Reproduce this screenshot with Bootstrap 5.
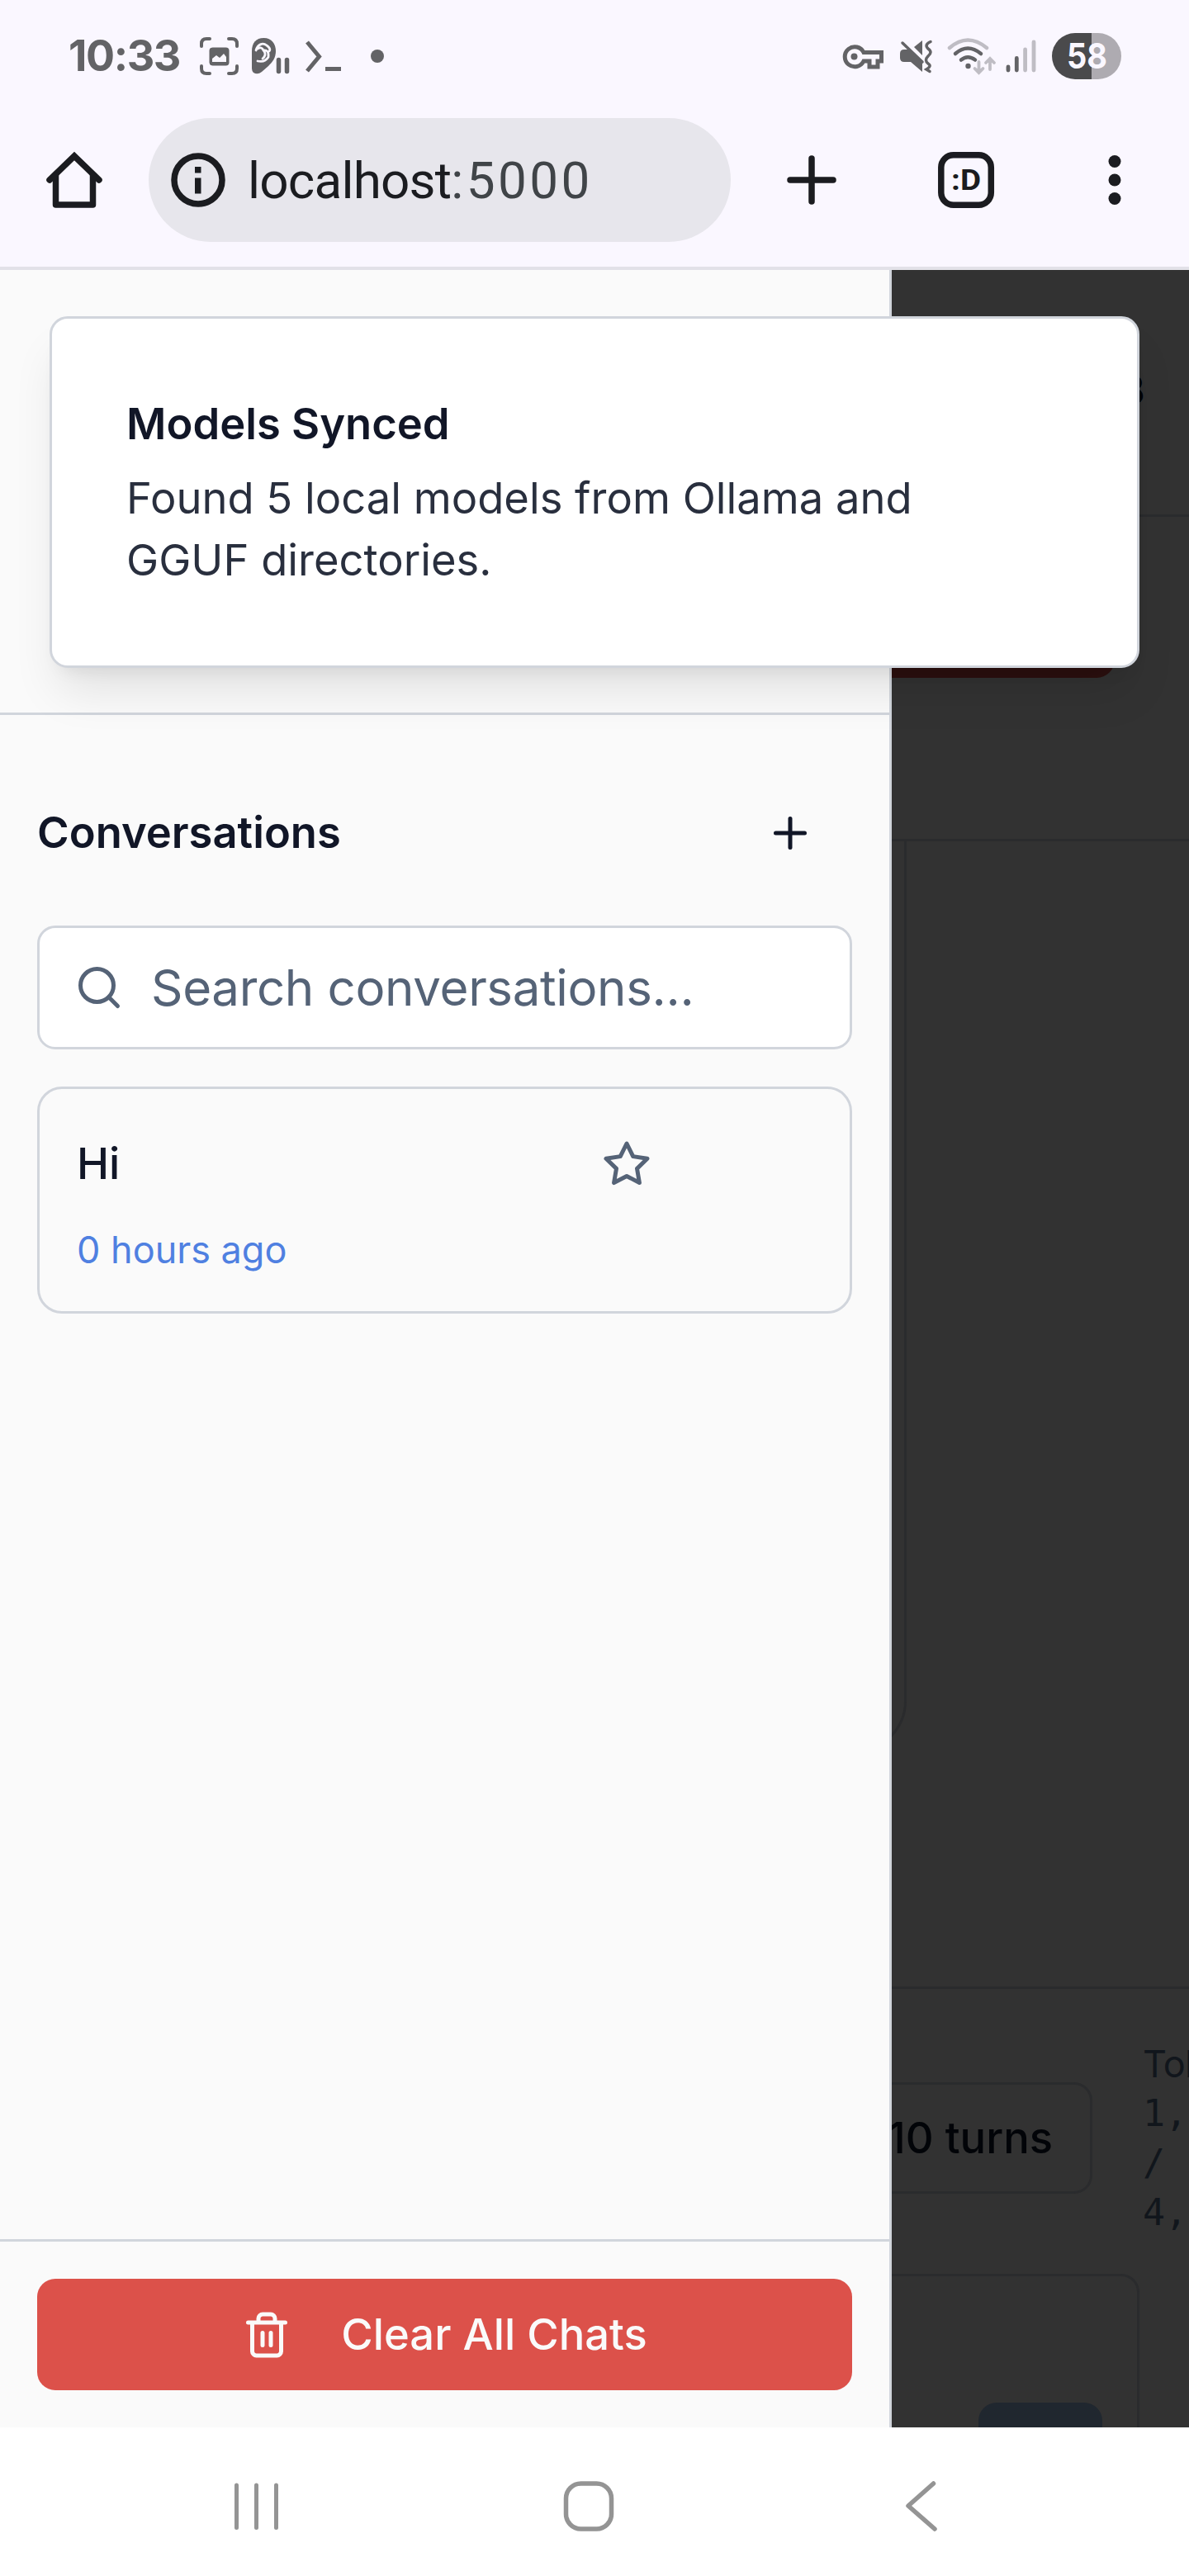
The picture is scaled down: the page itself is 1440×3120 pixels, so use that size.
<!DOCTYPE html>
<html lang="en">
<head>
<meta charset="utf-8">
<title>localhost:5000</title>
<meta name="viewport" content="width=device-width, initial-scale=1">
<link href="https://cdn.jsdelivr.net/npm/bootstrap@5.3.0/dist/css/bootstrap.min.css" rel="stylesheet">
<style>
html, body { margin: 0; }
body { width: 1440px; height: 3120px; font-family: Inter, "Liberation Sans", sans-serif; font-size: 52.5px; line-height: 75px; color: #111627; background: #fff; overflow: hidden; }
svg { display: block; flex: none; }
.chrome-top { background: #faf7ff; height: 327px; border-bottom: 4px solid #e2e1e8; }
.status-bar { padding: 40px 82px 0 83px; height: 96px; color: #636366; }
.clock { width: 157px; font-size: 52px; font-weight: 700; line-height: 56px; letter-spacing: -1.4px; white-space: nowrap; }
.url-row { height: 150px; margin-top: 47px; padding-left: 50px; color: #1b1c20; }
.url-pill { width: 705px; height: 150px; margin-left: 50px; padding-left: 20px; background: #e7e6ec; border-radius: 75px; font-family: Roboto, sans-serif; font-size: 62px; white-space: nowrap; }
.url-host { margin-left: 20px; letter-spacing: -.8px; }
.url-port { color: #404448; letter-spacing: 3.4px; }
.viewport { height: 2613px; background: #323232; }
.side-panel { width: 1080px; background: #fafafa; border-right: 3px solid #d1d5dc; }
.side-head { height: 539px; border-bottom: 3px solid #d1d5dc; }
.side-body { padding: 75px 45px 45px; }
.side-title { font-size: 52.5px; font-weight: 600; line-height: 75px; margin: 0; }
.new-chat { width: 150px; height: 135px; padding: 0; }
.search-box { height: 150px; margin-top: 45px; padding-left: 42px; gap: 33px; background: #fff; border: 3px solid #d1d5dc; border-radius: 22px; font-size: 60px; color: #556377; letter-spacing: -.35px; }
.chat-item { height: 275px; margin-top: 45px; padding: 53px 45px 0; background: transparent; border: 3px solid #d1d5dc; border-radius: 30px; }
.chat-name { font-weight: 500; width: 636px; }
.chat-time { font-size: 45px; line-height: 60px; color: #4f80e1; margin-top: 37px; }
.side-foot { height: 228px; padding: 45px; border-top: 3px solid #d1d5dc; }
.clear-btn, .clear-btn:hover { height: 135px; border: 0; border-radius: 22px; background: #dc514a; color: #fafafa; gap: 60px; font-size: 52.5px; line-height: 75px; font-weight: 500; }
.dim-pane { width: 360px; }
.line { border: 0 solid #2a2b2d; }
.app-head { height: 299px; border-bottom-width: 3px; padding: 115px 54px 0 0; font-size: 46px; font-weight: 700; line-height: 60px; color: #020408; }
.app-bar { height: 393px; border-bottom-width: 3px; }
.stop-btn { width: 270px; height: 135px; margin-top: 60px; background: #2c100f; border-radius: 0 22px 22px 0; }
.app-main { height: 1387px; }
.msg-panel { width: 18px; height: 1102px; overflow: hidden; }
.msg-shape { width: 180px; height: 1102px; border-width: 0 3px 3px 0; border-radius: 0 0 60px 0; flex: none; }
.app-foot { border-top-width: 3px; height: 534px; }
.foot-row { padding-top: 58px; height: 345px; }
.turns { width: 243px; height: 135px; margin-top: 55px; padding-right: 45px; border-width: 3px 3px 3px 0; border-radius: 0 22px 22px 0; color: #020408; font-weight: 500; white-space: nowrap; }
.tokens { margin-left: 61px; padding-top: 3px; font-size: 45px; line-height: 60px; color: #11161c; white-space: nowrap; letter-spacing: -.8px; }
.tokens .mono { font-family: "DejaVu Sans Mono", monospace; letter-spacing: 0; }
.composer { width: 300px; height: 186px; border-width: 3px 3px 0 0; border-radius: 0 22px 0 0; padding: 153px 42px 0 0; }
.send { width: 150px; height: 33px; background: #20272f; border-radius: 22px 22px 0 0; }
.sync-toast { position: absolute; z-index: 5; left: 60px; top: 56px; width: 1320px; height: 426px; padding: 90px; background: #fff; border: 3px solid #d1d5dc; border-radius: 22px; box-shadow: 0 37px 56px -11px rgba(0,0,0,.1), 0 15px 22px -15px rgba(0,0,0,.1); }
.toast-title { font-weight: 600; margin-bottom: 15px; }
.toast-text { color: #292f3e; width: 1000px; }
.nav-keys { height: 180px; padding: 10px 0 0 270px; color: #949494; }
</style>
</head>
<body class="d-flex flex-column">
<header class="chrome-top flex-shrink-0">
  <div class="status-bar d-flex">
    <div class="clock">10:33</div>
    <svg width="60" height="56" viewBox="240 40 60 56" fill="none" stroke="#636366" stroke-width="4" stroke-linecap="round">
      <path d="M244 56v-3q0-6 6-6h4M277 47h4q6 0 6 6v3M287 80v3q0 6-6 6h-4M254 89h-4q-6 0-6-6v-3"/>
      <rect x="253.500" y="57.500" width="24" height="22" rx="4" fill="#636366" stroke="none"/>
      <path d="M257 75v-4l5-4 4 3 5-5 3 4v6z" fill="#faf7ff" stroke="none"/>
    </svg>
    <svg width="60" height="56" viewBox="300 40 60 56">
      <path d="M319.500 46C329 46 334 53 334 62C334 70 330 75 325 80L317 87Q312 91 307 88Q305 86 305 83V62C305 52 310 46 319.500 46Z" fill="#636366"/>
      <path d="M310 61C312 54 318 51 323 55C326 57 328 60 326 62M312 59Q317 56 319 61Q326 60 325 69Q321 76 312 74M320 62Q323 67 318 71" fill="none" stroke="#faf7ff" stroke-width="2.800" stroke-linecap="round"/>
      <path d="M337.500 72.500V86.500M347.500 72.500V86.500" stroke="#636366" stroke-width="5.500" stroke-linecap="round"/>
    </svg>
    <svg width="70" height="56" viewBox="360 40 70 56" fill="none" stroke="#636366" stroke-width="5">
      <path d="M372 51L386.500 68.500L372 86M394 83.500H413"/>
    </svg>
    <svg width="50" height="56" viewBox="430 40 50 56"><circle cx="457" cy="68" r="8" fill="#636366"/></svg>
    <svg class="ms-auto" width="62" height="56" viewBox="1018 40 62 56">
      <path d="M1046 63.500A12 12 0 1 0 1046 74H1053V81H1063V74H1067.500V63.500Z" fill="none" stroke="#636366" stroke-width="5"/>
      <circle cx="1034.500" cy="68.500" r="4" fill="#636366"/>
    </svg>
    <svg width="60" height="56" viewBox="1080 40 60 56">
      <path d="M1095 60H1100L1117 76V87L1103 75H1095Q1090 75 1090 70V65Q1090 60 1095 60ZM1117 49V67L1107 57Z" fill="#636366"/>
      <path d="M1093 52L1117 75" stroke="#636366" stroke-width="3.500" stroke-linecap="round"/>
      <path d="M1127 50.500Q1119 54 1124 59Q1130 63 1124 68Q1119 73 1124 77Q1129 80 1122 84L1126 86.500" fill="none" stroke="#636366" stroke-width="3.500" stroke-linecap="round"/>
    </svg>
    <svg width="72" height="56" viewBox="1140 40 72 56" fill="none" stroke-width="4.500" stroke-linecap="round">
      <path d="M1150 58Q1172 39 1195 58" stroke="#bfbdc4"/>
      <path d="M1157 65Q1172 52 1188 65M1164 72.500Q1172 66 1181 72.500" stroke="#636366"/>
      <circle cx="1172.500" cy="80" r="3.200" fill="#636366"/>
      <path d="M1185.500 75V87M1180.500 83L1185.500 88L1190.500 83M1199 84V72M1194 76L1199 71L1204 76" stroke="#bfbdc4" stroke-width="3.800"/>
    </svg>
    <svg width="62" height="56" viewBox="1212 40 62 56" stroke-width="4.800" stroke-linecap="round">
      <path d="M1221 81V85M1231.300 70.500V85" stroke="#636366"/>
      <path d="M1241.600 60V85M1252 51V85" stroke="#bfbdc4"/>
    </svg>
    <svg width="84" height="56" viewBox="1274 40 84 56">
      <path d="M1322 40H1302A28 28 0 0 0 1302 96H1322Z" fill="#4a4a4c"/>
      <path d="M1322 40H1330A28 28 0 0 1 1330 96H1322Z" fill="#aeabb1"/>
      <text x="1316.500" y="83" text-anchor="middle" font-family="Inter, sans-serif" font-weight="700" font-size="43" textLength="49" lengthAdjust="spacingAndGlyphs" fill="#faf7ff">58</text>
    </svg>
  </div>
  <div class="url-row d-flex align-items-center">
    <svg width="80" height="80" viewBox="50 178 80 80" fill="none" stroke="#1b1c20" stroke-width="7.500" stroke-linecap="round" stroke-linejoin="round">
      <path d="M60 218L90 189L120 218" stroke-linejoin="miter"/><path d="M67.500 212V248H112.500V212"/>
    </svg>
    <div class="url-pill d-flex align-items-center">
      <svg width="80" height="80" viewBox="200 178 80 80" fill="#1b1c20">
        <circle cx="240" cy="218" r="29" fill="none" stroke="#1b1c20" stroke-width="7.500"/>
        <path d="M236 202h7.500v7.500h-7.500zM236 215.500h7.500v19h-7.500z"/>
      </svg>
      <span class="url-host">localhost</span><span class="url-port">:5000</span>
    </div>
    <svg width="80" height="80" viewBox="943 178 80 80" style="margin-left:58px" stroke="#1b1c20" stroke-width="7.500" stroke-linecap="round"><path d="M957 218H1009M983 192V244"/></svg>
    <svg width="80" height="80" viewBox="1130 178 80 80" style="margin-left:107px">
      <rect x="1139.800" y="187.800" width="60.500" height="60.500" rx="15" fill="none" stroke="#1b1c20" stroke-width="7.500"/>
      <text x="1152" y="229.500" font-family="Roboto, sans-serif" font-weight="700" font-size="35" textLength="36" lengthAdjust="spacingAndGlyphs" fill="#1b1c20">:D</text>
    </svg>
    <svg width="40" height="80" viewBox="1330 178 40 80" style="margin-left:120px" fill="#1b1c20"><circle cx="1350" cy="195.500" r="7.500"/><circle cx="1350" cy="218" r="7.500"/><circle cx="1350" cy="240.500" r="7.500"/></svg>
  </div>
</header>

<main class="viewport position-relative d-flex flex-shrink-0 overflow-hidden">
  <aside class="side-panel d-flex flex-column flex-shrink-0">
    <div class="side-head flex-shrink-0"></div>
    <div class="side-body flex-grow-1">
      <div class="d-flex align-items-center justify-content-between">
        <h2 class="side-title">Conversations</h2>
        <button class="btn new-chat d-flex align-items-center justify-content-center" aria-label="New conversation">
          <svg width="60" height="60" viewBox="0 0 24 24" fill="none" stroke="#111627" stroke-width="2" stroke-linecap="round"><path d="M5 12h14M12 5v14"/></svg>
        </button>
      </div>
      <div class="search-box d-flex align-items-center">
        <svg width="60" height="60" viewBox="0 0 24 24" fill="none" stroke="#556377" stroke-width="2" stroke-linecap="round"><circle cx="11" cy="11" r="8"/><path d="m21 21-4.300-4.300"/></svg>
        <span>Search conversations...</span>
      </div>
      <div class="chat-item">
        <div class="d-flex align-items-center">
          <div class="chat-name">Hi</div>
          <svg width="60" height="60" viewBox="0 0 24 24" fill="none" stroke="#556377" stroke-width="2" stroke-linecap="round" stroke-linejoin="round"><polygon points="12 2 15.090 8.260 22 9.270 17 14.140 18.180 21.020 12 17.770 5.820 21.020 7 14.140 2 9.270 8.910 8.260 12 2"/></svg>
        </div>
        <div class="chat-time">0 hours ago</div>
      </div>
    </div>
    <div class="side-foot flex-shrink-0">
      <button class="clear-btn btn w-100 p-0 d-flex align-items-center justify-content-center">
        <svg width="60" height="60" viewBox="0 0 24 24" fill="none" stroke="#fafafa" stroke-width="2" stroke-linecap="round" stroke-linejoin="round"><path d="M3 6h18M19 6v14c0 1-1 2-2 2H7c-1 0-2-1-2-2V6M8 6V4c0-1 1-2 2-2h4c1 0 2 1 2 2v2M10 11v6M14 11v6"/></svg>
        <span>Clear All Chats</span>
      </button>
    </div>
  </aside>

  <section class="dim-pane d-flex flex-column flex-shrink-0">
    <div class="app-head line text-end flex-shrink-0">B</div>
    <div class="app-bar line d-flex align-items-start flex-shrink-0"><div class="stop-btn"></div></div>
    <div class="app-main flex-shrink-0"><div class="msg-panel d-flex justify-content-end"><div class="msg-shape line"></div></div></div>
    <div class="app-foot line flex-shrink-0">
      <div class="foot-row d-flex align-items-start">
        <div class="turns line d-flex align-items-center justify-content-end flex-shrink-0 overflow-hidden">10 turns</div>
        <div class="tokens">Tokens:<div class="mono">1,<br>/<br>4,</div></div>
      </div>
      <div class="composer line d-flex justify-content-end"><div class="send"></div></div>
    </div>
  </section>

  <div class="sync-toast" role="status">
    <div class="toast-title">Models Synced</div>
    <div class="toast-text">Found 5 local models from Ollama and GGUF directories.</div>
  </div>
</main>

<nav class="nav-keys d-flex align-items-center flex-shrink-0 bg-white">
  <svg width="80" height="80" viewBox="270 2995 80 80" stroke="#949494" stroke-width="5" stroke-linecap="round"><path d="M286.500 3010V3061.500M310.500 3010V3061.500M334.500 3010V3061.500"/></svg>
  <svg width="80" height="80" viewBox="673 2995 80 80" style="margin-left:323px" fill="none" stroke="#949494" stroke-width="5.500"><rect x="685.500" y="3008" width="55" height="55" rx="18"/></svg>
  <svg width="80" height="80" viewBox="1076 2995 80 80" style="margin-left:323px" fill="none" stroke="#949494" stroke-width="5.500" stroke-linecap="round" stroke-linejoin="round"><path d="M1130.500 3008L1100 3035L1132 3063"/></svg>
</nav>
<script src="https://cdn.jsdelivr.net/npm/bootstrap@5.3.0/dist/js/bootstrap.bundle.min.js"></script>
</body>
</html>
